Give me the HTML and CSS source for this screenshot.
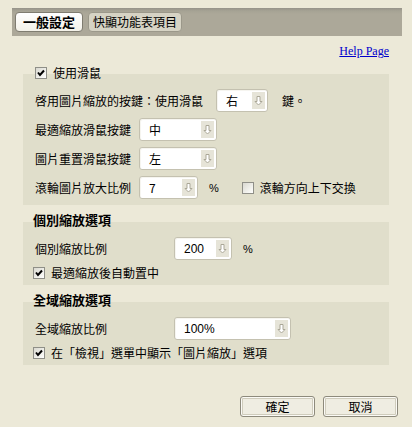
FILE: index.html
```html
<!DOCTYPE html>
<html lang="zh-Hant">
<head>
<meta charset="utf-8">
<link rel="stylesheet" href="styles.css">
</head>
<body>
<div class="tabbar">
  <div class="tab tab-active">一般設定</div>
  <div class="tab">快顯功能表項目</div>
</div>
<div class="help"><a href="#">Help Page</a></div>
<div class="content">
  <div class="heading check-heading">
    <span class="cb checked"><svg viewBox="0 0 12 12" width="12" height="12"><path d="M3 5.5 L5 8 L9 3.5" fill="none" stroke="#000" stroke-width="2"/></svg></span>
    <span>使用滑鼠</span>
  </div>
  <div class="panel">
    <div class="row">
      <span>啓用圖片縮放的按鍵：使用滑鼠</span>
      <span class="sel w52 ml13"><span class="val">右</span><span class="btn"><svg viewBox="0 0 13 17" width="13" height="17"><path d="M5 4.5 H8 V9.5 H10 L6.5 13 L3 9.5 H5 Z" fill="#fff" stroke="#aaa797" stroke-width="1"/></svg></span></span>
      <span class="ml14">鍵。</span>
    </div>
    <div class="row">
      <span class="lbl1">最適縮放滑鼠按鍵</span>
      <span class="sel w78"><span class="val">中</span><span class="btn"><svg viewBox="0 0 13 17" width="13" height="17"><path d="M5 4.5 H8 V9.5 H10 L6.5 13 L3 9.5 H5 Z" fill="#fff" stroke="#aaa797" stroke-width="1"/></svg></span></span>
    </div>
    <div class="row">
      <span class="lbl1">圖片重置滑鼠按鍵</span>
      <span class="sel w78"><span class="val">左</span><span class="btn"><svg viewBox="0 0 13 17" width="13" height="17"><path d="M5 4.5 H8 V9.5 H10 L6.5 13 L3 9.5 H5 Z" fill="#fff" stroke="#aaa797" stroke-width="1"/></svg></span></span>
    </div>
    <div class="row">
      <span class="lbl1">滾輪圖片放大比例</span>
      <span class="sel w59"><span class="val">7</span><span class="btn"><svg viewBox="0 0 13 17" width="13" height="17"><path d="M5 4.5 H8 V9.5 H10 L6.5 13 L3 9.5 H5 Z" fill="#fff" stroke="#aaa797" stroke-width="1"/></svg></span></span>
      <span class="pct">%</span>
      <span class="cb ml23"></span>
      <span class="ml6">滾輪方向上下交換</span>
    </div>
  </div>

  <div class="heading">個別縮放選項</div>
  <div class="panel">
    <div class="row">
      <span class="lbl2">個別縮放比例</span>
      <span class="sel w58"><span class="val num">200</span><span class="btn"><svg viewBox="0 0 13 17" width="13" height="17"><path d="M5 4.5 H8 V9.5 H10 L6.5 13 L3 9.5 H5 Z" fill="#fff" stroke="#aaa797" stroke-width="1"/></svg></span></span>
      <span class="pct">%</span>
    </div>
    <div class="row crow">
      <span class="cb checked"><svg viewBox="0 0 12 12" width="12" height="12"><path d="M3 5.5 L5 8 L9 3.5" fill="none" stroke="#000" stroke-width="2"/></svg></span>
      <span class="ml6">最適縮放後自動置中</span>
    </div>
  </div>

  <div class="heading">全域縮放選項</div>
  <div class="panel">
    <div class="row">
      <span class="lbl2">全域縮放比例</span>
      <span class="sel w117"><span class="val num">100%</span><span class="btn"><svg viewBox="0 0 13 17" width="13" height="17"><path d="M5 4.5 H8 V9.5 H10 L6.5 13 L3 9.5 H5 Z" fill="#fff" stroke="#aaa797" stroke-width="1"/></svg></span></span>
    </div>
    <div class="row crow">
      <span class="cb checked"><svg viewBox="0 0 12 12" width="12" height="12"><path d="M3 5.5 L5 8 L9 3.5" fill="none" stroke="#000" stroke-width="2"/></svg></span>
      <span class="ml6">在「檢視」選單中顯示「圖片縮放」選項</span>
    </div>
  </div>
</div>
<div class="buttons">
  <button class="button b1">確定</button>
  <button class="button b2">取消</button>
</div>
</body>
</html>
```
FILE: styles.css
```css
html, body {
  margin: 0;
  padding: 0;
}
body {
  background: #ECE9D8;
  font-family: "Noto Sans CJK TC", "Liberation Sans", sans-serif;
  font-size: 12px;
  color: #000;
  width: 412px;
  height: 427px;
  overflow: hidden;
}
.tabbar {
  margin: 8px 10px 0 12px;
  height: 28px;
  box-sizing: border-box;
  padding: 4px 3px;
  display: flex;
  gap: 5px;
  background: linear-gradient(#96938a 0, #a6a394 3px, #aca899 6px, #aca899 100%);
}
.tab {
  height: 20px;
  box-sizing: border-box;
  border: 1px solid #9b988a;
  border-radius: 4px;
  background: #d6d3c4;
  padding: 0 4px;
  line-height: 18px;
  font-size: 12px;
}
.tab-active {
  background: linear-gradient(#ffffff, #f3f1e8);
  border-color: #7f7c70;
  font-weight: bold;
  font-size: 13px;
  padding: 0 7px;
}
.help {
  margin-top: 5px;
  height: 16px;
  text-align: right;
  padding-right: 23px;
}
.help a {
  font-family: "Liberation Serif", serif;
  font-size: 12px;
  line-height: 16px;
  color: #0000cc;
  text-decoration: underline;
}
.content {
  padding: 0 23px;
}
.heading {
  position: relative;
  height: 16px;
  line-height: 16px;
  margin-bottom: -6px;
  margin-top: 7px;
  padding-left: 10px;
  font-weight: bold;
  font-size: 13px;
  display: flex;
  align-items: center;
}
.check-heading {
  margin-top: 8px;
  font-weight: normal;
  font-size: 12px;
  padding-left: 12px;
  gap: 6px;
  height: 15px;
}
.panel {
  background: #e0decb;
  padding: 15px 0 6px 12px;
  display: flex;
  flex-direction: column;
  gap: 6px;
}
.row {
  display: flex;
  align-items: center;
  height: 23px;
  white-space: nowrap;
}
.crow {
  height: 13px;
  margin-left: -2px;
}
.lbl1 { width: 104px; }
.lbl2 { width: 139px; }
.ml13 { margin-left: 13px; }
.ml14 { margin-left: 14px; }
.ml23 { margin-left: 23px; }
.ml6 { margin-left: 6px; }
.pct {
  margin-left: 11px;
  font-family: "Liberation Sans", sans-serif;
  font-size: 11px;
}
.sel {
  height: 23px;
  box-sizing: border-box;
  background: #fff;
  border: 1px solid #c4c1b0;
  border-radius: 3px;
  display: flex;
  align-items: center;
  justify-content: space-between;
  padding: 0 2px 0 9px;
  box-shadow: inset 1px 1px 0 #f6f5f0;
}
.w52 { width: 52px; }
.w58 { width: 58px; }
.w59 { width: 59px; }
.w78 { width: 78px; }
.w117 { width: 117px; }
.val { line-height: 16px; }
.num {
  font-family: "Liberation Sans", sans-serif;
  font-size: 12px;
}
.btn {
  width: 13px;
  height: 17px;
  background: #e6e4d8;
  display: flex;
}
.cb {
  width: 12px;
  height: 12px;
  box-sizing: border-box;
  border: 1px solid #8f8f88;
  background: linear-gradient(135deg, #d9d8d0, #f4f4f0 70%, #ffffff);
  display: inline-flex;
  flex: none;
}
.cb svg {
  margin: -1px;
}
.buttons {
  display: flex;
  justify-content: flex-end;
  gap: 8px;
  padding-right: 14px;
  margin-top: 31px;
}
.button {
  width: 75px;
  height: 21px;
  box-sizing: border-box;
  border: 1px solid #8d8a7c;
  border-radius: 3px;
  background: #efede2;
  box-shadow: inset 0 0 0 1px #fbfaf5, inset 0 0 0 2px #cfccbc;
  font-family: "Noto Sans CJK TC", sans-serif;
  font-size: 12px;
  line-height: 17px;
  padding: 0;
  color: #000;
}
```
